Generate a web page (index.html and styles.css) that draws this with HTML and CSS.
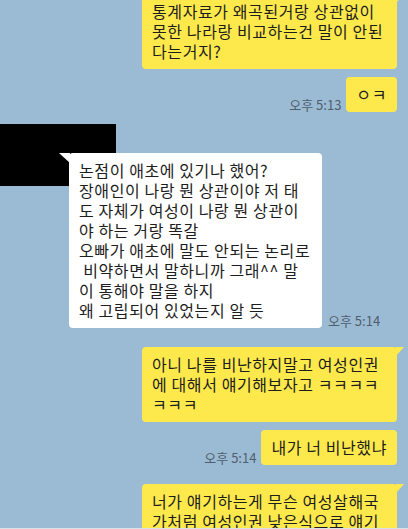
FILE: index.html
```html
<!doctype html>
<html>
<head>
<meta charset="utf-8">
<title>채팅</title>
<link rel="stylesheet" href="styles.css">
</head>

<body>
<div class="chat">
	<div class="row me first">
		<div class="bubble wide">통계자료가 왜곡된거랑 상관없이<br>못한 나라랑 비교하는건 말이 안된<br>다는거지?</div>
	</div>
	<div class="row me near">
		<span class="time">오후 5:13</span>
		<div class="bubble">ㅇㅋ</div>
	</div>
	<div class="row you">
		<div class="cover"></div>
		<div class="bubble white">논점이 애초에 있기나 했어?<br>장애인이 나랑 뭔 상관이야 저 태<br>도 자체가 여성이 나랑 뭔 상관이<br>야 하는 거랑 똑갈<br>오빠가 애초에 말도 안되는 논리로<br>&nbsp;비약하면서 말하니까 그래^^ 말<br>이 통해야 말을 하지<br>왜 고립되어 있었는지 알 듯</div>
		<span class="time">오후 5:14</span>
	</div>
	<div class="row me far">
		<div class="bubble wide">아니 나를 비난하지말고 여성인권<br>에 대해서 얘기해보자고 ㅋㅋㅋㅋ<br>ㅋㅋㅋ</div>
	</div>
	<div class="row me near">
		<span class="time">오후 5:14</span>
		<div class="bubble">내가 너 비난했냐</div>
	</div>
	<div class="row me far">
		<div class="bubble wide">너가 얘기하는게 무슨 여성살해국<br>가처럼 여성인권 낮은식으로 얘기</div>
	</div>
</div>
</body>
</html>
```

FILE: styles.css
```css
* { margin:0; padding:0; box-sizing:border-box; }
body { background:#9bbbd4; font-family:"Noto Sans CJK KR", "Liberation Sans", sans-serif; }

.chat { height:529px; overflow:hidden; border-bottom:1px solid #d9e1e8; background:#9bbbd4; }

.row { display:flex; align-items:flex-end; }
.row.me { justify-content:flex-end; padding-right:11px; gap:5px; }
.row.you { position:relative; padding-left:69px; gap:6px; margin-top:41px; }
.row.first { margin-top:-6px; }
.row.near { margin-top:8px; }
.row.far { margin-top:19px; }

.bubble { position:relative; z-index:2; background:#fee94d; color:#1d1d1d; font-size:16px; letter-spacing:0.6px; line-height:20px; padding:7px 10px 8px; border-radius:4px; white-space:nowrap; }
.bubble.wide { width:255px; }
.bubble.white { background:#fff; width:253px; }

.bubble.wide::after { content:""; position:absolute; top:0; right:-7px; width:8px; height:9px; background:#fee94d; clip-path:polygon(0 0, 100% 0, 0 100%); }
.bubble.white::before { content:""; position:absolute; top:0; left:-10px; width:11px; height:10px; background:#fff; clip-path:polygon(0 0, 100% 0, 100% 100%); }

.time { font-size:13px; line-height:14px; color:#4f5e6c; white-space:nowrap; }

.cover { position:absolute; left:0; top:-29px; width:116px; height:62px; background:#000; z-index:1; }
```
